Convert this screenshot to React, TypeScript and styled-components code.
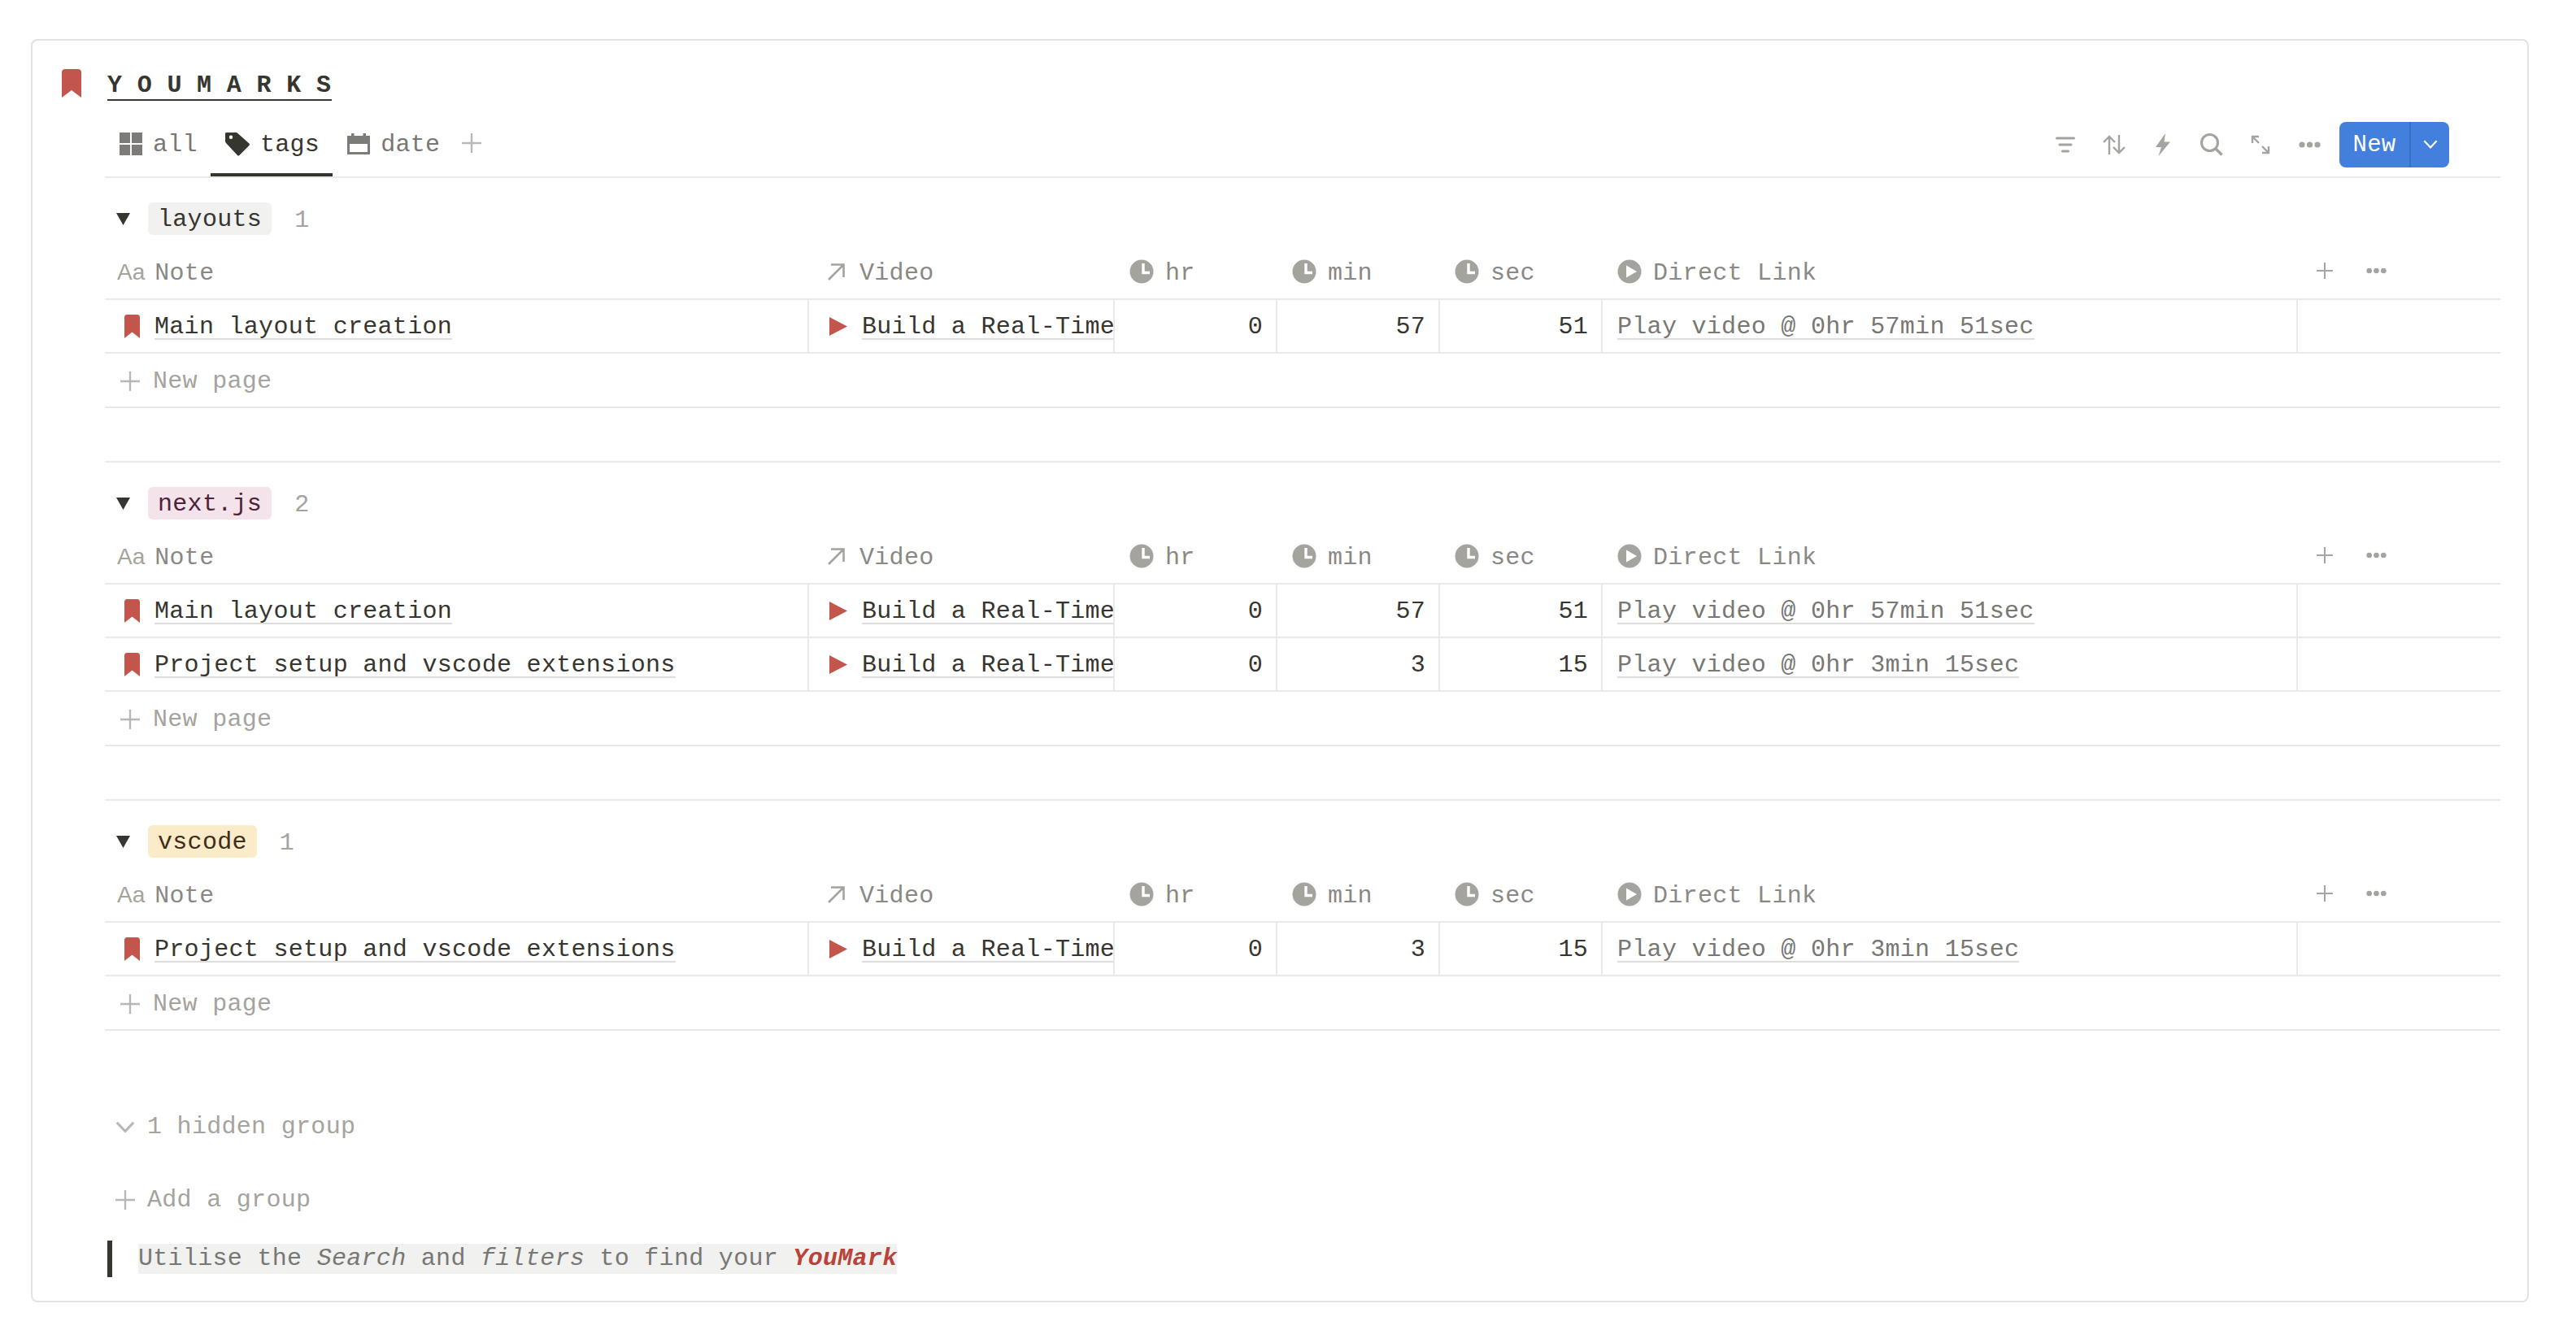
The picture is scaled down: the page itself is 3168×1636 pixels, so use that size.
import React from 'react';
import styled, { createGlobalStyle } from 'styled-components';

const GlobalStyle = createGlobalStyle`
  html, body { margin: 0; padding: 0; background: #fff; }
  body { font-family: 'Liberation Mono', 'DejaVu Sans Mono', monospace; }
  svg { flex-shrink: 0; }
`;

const RED = '#c4554d';
const GREY = '#a5a39e';
const LIGHT = '#b9b8b4';

const BookmarkIcon = ({ width = 24, height = 35 }: { width?: number; height?: number }) => (
  <svg width={width} height={height} viewBox="0 0 24 35" fill={RED} preserveAspectRatio="none">
    <path d="M0 4 C0 1.5 1.5 0 4 0 H20 C22.5 0 24 1.5 24 4 V35 L12 26 L0 35 Z" />
  </svg>
);

const GridIcon = () => (
  <svg width="28" height="28" viewBox="0 0 28 28" fill="#7d7b77">
    <rect x="0" y="0" width="13" height="13" />
    <rect x="15" y="0" width="13" height="13" />
    <rect x="0" y="15" width="13" height="13" />
    <rect x="15" y="15" width="13" height="13" />
  </svg>
);

const TagIcon = () => (
  <svg width="30" height="30" viewBox="0 0 30 30" fill="#37352f">
    <path fillRule="evenodd" d="M0 2 C0 1 1 1 2 1 H13 C14 1 14.6 1.2 15.4 2 L29.4 14.6 C30.2 15.4 30.2 16.2 29.4 17 L17.4 29 C16.6 29.8 15.8 29.8 15 29 L1 14 C0.3 13.2 0 12.6 0 11.6 Z M7 4.5 A2.2 2.2 0 1 0 7 8.9 A2.2 2.2 0 1 0 7 4.5 Z" />
  </svg>
);

const CalendarIcon = () => (
  <svg width="28" height="26" viewBox="0 0 28 26" fill="#7d7b77">
    <path fillRule="evenodd" d="M0 3 H5 V0 H8.5 V3 H19.5 V0 H23 V3 H28 V26 H0 Z M3 13 V23 H25 V13 Z" />
  </svg>
);

const PlusIcon = ({ size = 24, color = LIGHT }: { size?: number; color?: string }) => (
  <svg width={size} height={size} viewBox="0 0 24 24" stroke={color} strokeWidth="2.4" fill="none">
    <path d="M12 0 V24 M0 12 H24" />
  </svg>
);

const DotsIcon = ({ width = 27 }: { width?: number }) => (
  <svg width={width} height="8" viewBox="0 0 27 8" fill={GREY}>
    <circle cx="4" cy="4" r="3.6" />
    <circle cx="13.5" cy="4" r="3.6" />
    <circle cx="23" cy="4" r="3.6" />
  </svg>
);

const FilterIcon = () => (
  <svg width="24" height="20" viewBox="0 0 24 20" stroke={GREY} strokeWidth="3" strokeLinecap="round" fill="none">
    <path d="M1.5 2 H22.5 M5 10 H19 M8.5 18 H15.5" />
  </svg>
);

const SortIcon = () => (
  <svg width="28" height="24" viewBox="0 0 28 24" stroke={GREY} strokeWidth="2.4" fill="none">
    <path d="M8 24 V2 M1 9 L8 2 L15 9 M20 0 V22 M13 15 L20 22 L27 15" />
  </svg>
);

const BoltIcon = () => (
  <svg width="18" height="28" viewBox="0 0 18 28" fill={GREY}>
    <path d="M12 0 L0 17 H7 L3.5 28 L18 10.5 H10.5 Z" />
  </svg>
);

const SearchIcon = () => (
  <svg width="28" height="28" viewBox="0 0 28 28" stroke={GREY} strokeWidth="3" fill="none">
    <circle cx="11.5" cy="11.5" r="10" />
    <path d="M18.5 18.5 L26.5 26.5" strokeWidth="3.4" />
  </svg>
);

const ExpandIcon = () => (
  <svg width="24" height="24" viewBox="0 0 24 24" stroke={GREY} strokeWidth="2.4" fill="none">
    <path d="M2 2 L10 10 M14 14 L22 22 M2 10 V2 H10 M14 22 H22 V14" />
  </svg>
);

const ChevronIcon = ({ color = '#fff', width = 18, weight = 2.4 }: { color?: string; width?: number; weight?: number }) => (
  <svg width={width} height={width * 0.6} viewBox="0 0 20 12" stroke={color} strokeWidth={weight} fill="none">
    <path d="M1.5 1.5 L10 10.5 L18.5 1.5" />
  </svg>
);

const CaretIcon = () => (
  <svg width="17" height="15" viewBox="0 0 17 15" fill="#37352f">
    <path d="M0 0 H17 L8.5 15 Z" />
  </svg>
);

const ArrowIcon = () => (
  <svg width="21" height="21" viewBox="0 0 21 21" stroke={GREY} strokeWidth="2.6" fill="none">
    <path d="M1 20 L19.5 1.5 M4 1.5 H19.5 V17" />
  </svg>
);

const ClockIcon = () => (
  <svg width="30" height="30" viewBox="0 0 30 30">
    <circle cx="15" cy="15" r="14.5" fill={GREY} />
    <path d="M17 5 V16.5 H25" stroke="#fff" strokeWidth="3.4" fill="none" />
  </svg>
);

const PlayCircleIcon = () => (
  <svg width="30" height="30" viewBox="0 0 30 30">
    <circle cx="15" cy="15" r="14.5" fill={GREY} />
    <path d="M11 7.5 L24 15 L11 22.5 Z" fill="#fff" />
  </svg>
);

const PlayIcon = () => (
  <svg width="22" height="23" viewBox="0 0 22 23" fill={RED}>
    <path d="M0 0 L22 11.5 L0 23 Z" />
  </svg>
);

const Page = styled.div`
  padding: 48px 58px 34px 38px;
  color: #37352f;
  font-size: 30px;
  letter-spacing: 0.3px;
`;

const Card = styled.div`
  display: flex;
  border: 2px solid #e3e2e0;
  border-radius: 8px;
  height: 1554px;
  box-sizing: border-box;
`;

const Gutter = styled.div`
  flex: 0 0 89px;
  box-sizing: border-box;
  padding: 35px 0 0 36px;
`;

const Main = styled.div`
  flex: 1;
  min-width: 0;
  padding-right: 33px;
`;

const Title = styled.div`
  height: 74px;
  display: flex;
  align-items: flex-end;
  padding-left: 3px;
`;

const TitleText = styled.span`
  display: block;
  width: 276px;
  white-space: nowrap;
  font-weight: 700;
  font-size: 30px;
  letter-spacing: 18.7px;
  line-height: 37px;
  height: 35px;
  border-bottom: 2px solid #37352f;
`;

const TabBar = styled.div`
  height: 95px;
  box-sizing: border-box;
  display: flex;
  align-items: stretch;
  border-bottom: 2px solid #e9e9e7;
`;

const Tabs = styled.div`
  display: flex;
  flex: 1;
`;

const Tab = styled.div<{ $active?: boolean }>`
  display: flex;
  align-items: center;
  gap: 13px;
  height: 100%;
  box-sizing: border-box;
  padding: 19px 16px 0 18px;
  color: ${(p) => (p.$active ? '#37352f' : '#787774')};
  border-bottom: 4px solid ${(p) => (p.$active ? '#37352f' : 'transparent')};

  svg {
    margin-top: -3px;
  }
`;

const AddTab = styled.div`
  display: flex;
  align-items: center;
  padding: 10px 0 0 11px;
`;

const Tools = styled.div`
  display: flex;
  align-items: center;
  padding: 14px 63px 0 0;
`;

const ToolIcon = styled.span`
  display: flex;
  justify-content: center;
  align-items: center;
  width: 60px;
`;

const NewButton = styled.div`
  display: flex;
  align-items: stretch;
  height: 56px;
  width: 135px;
  margin-left: 7px;
  border-radius: 8px;
  background: #437fdd;
  color: #fff;
  font-size: 29px;
`;

const NewLabel = styled.span`
  flex: 0 0 88px;
  display: flex;
  align-items: center;
  justify-content: center;
  box-sizing: border-box;
  padding-top: 2px;
  border-right: 2px solid #3a70c4;
`;

const NewCaret = styled.span`
  flex: 1;
  display: flex;
  align-items: center;
  justify-content: center;
`;

const Group = styled.section<{ $divided?: boolean }>`
  border-top: ${(p) => (p.$divided ? '2px solid #e9e9e7' : '0')};
  margin-top: ${(p) => (p.$divided ? '65px' : '0')};
`;

const GroupHead = styled.div`
  display: flex;
  align-items: center;
  height: 40px;
  margin-top: 30px;
  padding-left: 14px;
`;

const Pill = styled.span<{ $bg: string; $fg: string }>`
  display: inline-flex;
  align-items: center;
  box-sizing: border-box;
  height: 40px;
  padding: 2px 12px 0;
  margin-left: 22px;
  border-radius: 6px;
  background: ${(p) => p.$bg};
  color: ${(p) => p.$fg};
`;

const Count = styled.span`
  color: ${GREY};
  margin: 3px 0 0 28px;
`;

const Row = styled.div<{ $head?: boolean }>`
  display: grid;
  grid-template-columns: 866px 376px 200px 200px 200px 855px 1fr;
  height: ${(p) => (p.$head ? '80px' : '66px')};
  box-sizing: border-box;
  border-bottom: 2px solid #e9e9e7;
`;

const HeadCell = styled.div<{ $inset?: number }>`
  display: flex;
  align-items: center;
  gap: 14px;
  padding: 16px 0 0 ${(p) => p.$inset ?? 18}px;
  color: #8a8884;

  svg {
    margin-top: -4px;
  }
`;

const ArrowCell = styled(HeadCell)`
  gap: 18px;
`;

const NoteHead = styled(HeadCell)`
  gap: 12px;
`;

const AaMark = styled.span`
  color: ${GREY};
  font-family: 'Liberation Sans', sans-serif;
  font-size: 28px;
  letter-spacing: 0;
  margin-top: -3px;
`;

const HeadActions = styled.div`
  display: flex;
  align-items: center;
  gap: 41px;
  padding: 10px 0 0 23px;
`;

const Cell = styled.div<{ $first?: boolean; $last?: boolean }>`
  display: flex;
  align-items: center;
  min-width: 0;
  overflow: hidden;
  box-sizing: border-box;
  border-right: ${(p) => (p.$first || p.$last ? '0' : '2px solid #e9e9e7')};
`;

const NoteCell = styled(Cell)`
  gap: 18px;
  padding-left: 24px;
  border-right: 2px solid #e9e9e7;
`;

const VideoCell = styled(Cell)`
  gap: 18px;
  padding-left: 25px;
`;

const NumberCell = styled(Cell)`
  justify-content: flex-end;
  padding: 2px 16px 0 0;
`;

const LinkCell = styled(Cell)`
  padding-left: 18px;
`;

const PageLink = styled.span`
  display: inline-block;
  height: 32px;
  line-height: 36px;
  white-space: nowrap;
  border-bottom: 2px solid #dedddb;
`;

const MutedLink = styled(PageLink)`
  color: #787774;
`;

const NewPage = styled.div`
  display: flex;
  align-items: center;
  gap: 16px;
  height: 67px;
  box-sizing: border-box;
  padding: 2px 0 0 19px;
  color: ${GREY};
  border-bottom: 2px solid #e9e9e7;
`;

const FooterRow = styled.div<{ $top: number }>`
  display: flex;
  align-items: center;
  gap: 15px;
  height: 40px;
  margin-top: ${(p) => p.$top}px;
  padding-left: 13px;
  color: ${GREY};
`;

const Quote = styled.div`
  display: flex;
  align-items: center;
  margin-top: 30px;
  height: 45px;
  padding-left: 32px;
  margin-left: 3px;
  border-left: 6px solid #37352f;
`;

const QuoteText = styled.span`
  background: #f1f1ef;
  color: #787774;
  line-height: 37px;
`;

const Accent = styled.em`
  color: #b8433b;
  font-weight: 700;
`;

const timeColumns = ['hr', 'min', 'sec'];

type Entry = { note: string; hr: number; min: number; sec: number };

const groups: { name: string; bg: string; fg: string; entries: Entry[] }[] = [
  {
    name: 'layouts',
    bg: '#f1f1ef',
    fg: '#37352f',
    entries: [{ note: 'Main layout creation', hr: 0, min: 57, sec: 51 }],
  },
  {
    name: 'next.js',
    bg: '#f4e3ea',
    fg: '#4c2337',
    entries: [
      { note: 'Main layout creation', hr: 0, min: 57, sec: 51 },
      { note: 'Project setup and vscode extensions', hr: 0, min: 3, sec: 15 },
    ],
  },
  {
    name: 'vscode',
    bg: '#faecc9',
    fg: '#402c1b',
    entries: [{ note: 'Project setup and vscode extensions', hr: 0, min: 3, sec: 15 }],
  },
];

const App = () => (
  <Page>
    <GlobalStyle />
    <Card>
      <Gutter>
        <BookmarkIcon />
      </Gutter>
      <Main>
        <Title>
          <TitleText>YOUMARKS</TitleText>
        </Title>
        <TabBar>
          <Tabs>
            <Tab>
              <GridIcon />
              all
            </Tab>
            <Tab $active>
              <TagIcon />
              tags
            </Tab>
            <Tab>
              <CalendarIcon />
              date
            </Tab>
            <AddTab>
              <PlusIcon />
            </AddTab>
          </Tabs>
          <Tools>
            <ToolIcon><FilterIcon /></ToolIcon>
            <ToolIcon><SortIcon /></ToolIcon>
            <ToolIcon><BoltIcon /></ToolIcon>
            <ToolIcon><SearchIcon /></ToolIcon>
            <ToolIcon><ExpandIcon /></ToolIcon>
            <ToolIcon><DotsIcon /></ToolIcon>
            <NewButton>
              <NewLabel>New</NewLabel>
              <NewCaret><ChevronIcon /></NewCaret>
            </NewButton>
          </Tools>
        </TabBar>
        {groups.map((group, i) => (
          <Group key={group.name} $divided={i > 0}>
            <GroupHead>
              <CaretIcon />
              <Pill $bg={group.bg} $fg={group.fg}>{group.name}</Pill>
              <Count>{group.entries.length}</Count>
            </GroupHead>
            <Row $head>
              <NoteHead $inset={15}><AaMark>Aa</AaMark>Note</NoteHead>
              <ArrowCell $inset={23}><ArrowIcon />Video</ArrowCell>
              {timeColumns.map((label) => (
                <HeadCell key={label}><ClockIcon />{label}</HeadCell>
              ))}
              <HeadCell><PlayCircleIcon />Direct Link</HeadCell>
              <HeadActions><PlusIcon size={20} color={GREY} /><DotsIcon width={25} /></HeadActions>
            </Row>
            {group.entries.map((entry) => (
              <Row key={entry.note}>
                <NoteCell $first>
                  <BookmarkIcon width={19} height={29} />
                  <PageLink>{entry.note}</PageLink>
                </NoteCell>
                <VideoCell>
                  <PlayIcon />
                  <PageLink>Build a Real-Time</PageLink>
                </VideoCell>
                <NumberCell>{entry.hr}</NumberCell>
                <NumberCell>{entry.min}</NumberCell>
                <NumberCell>{entry.sec}</NumberCell>
                <LinkCell>
                  <MutedLink>
                    Play video @ {entry.hr}hr {entry.min}min {entry.sec}sec
                  </MutedLink>
                </LinkCell>
                <Cell $last />
              </Row>
            ))}
            <NewPage><PlusIcon />New page</NewPage>
          </Group>
        ))}
        <FooterRow $top={98}>
          <ChevronIcon color={LIGHT} width={24} weight={2.6} />
          1 hidden group
        </FooterRow>
        <FooterRow $top={50}>
          <PlusIcon />
          Add a group
        </FooterRow>
        <Quote>
          <QuoteText>
            Utilise the <em>Search</em> and <em>filters</em> to find your <Accent>YouMark</Accent>
          </QuoteText>
        </Quote>
      </Main>
    </Card>
  </Page>
);

export default App;
